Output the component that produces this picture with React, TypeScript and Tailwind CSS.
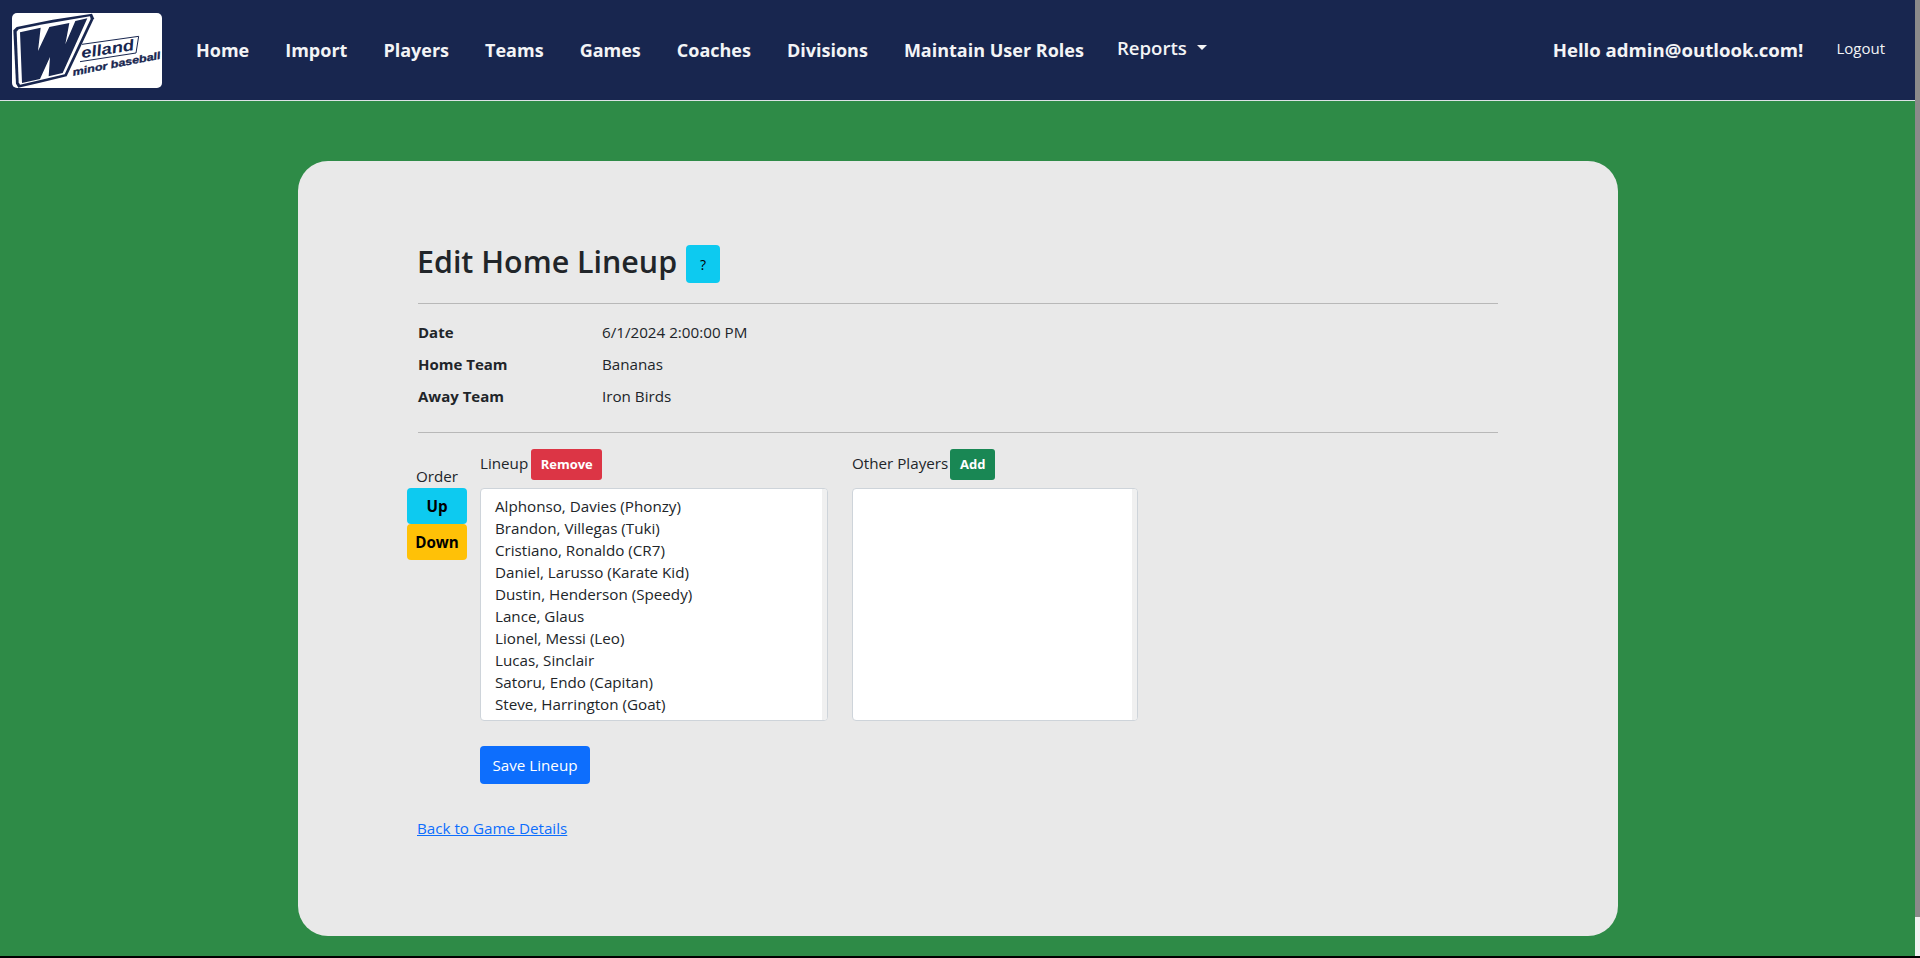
import React from "react";

const NAV_LINKS = ["Home", "Import", "Players", "Teams", "Games", "Coaches", "Divisions", "Maintain User Roles"];

const LINEUP = [
  "Alphonso, Davies (Phonzy)",
  "Brandon, Villegas (Tuki)",
  "Cristiano, Ronaldo (CR7)",
  "Daniel, Larusso (Karate Kid)",
  "Dustin, Henderson (Speedy)",
  "Lance, Glaus",
  "Lionel, Messi (Leo)",
  "Lucas, Sinclair",
  "Satoru, Endo (Capitan)",
  "Steve, Harrington (Goat)",
];

const GAME_INFO = [
  { label: "Date", value: "6/1/2024 2:00:00 PM" },
  { label: "Home Team", value: "Bananas" },
  { label: "Away Team", value: "Iron Birds" },
];

// logo is drawn, coordinates are 3x the page pixels
const Logo = () => (
  <svg viewBox="36 36 450 225" className="w-[150px] h-[75px] bg-white rounded-[5px] shrink-0">
    {/* big W: navy outline, white gap, navy fill */}
    <path d="M40 88 L50 78 L128 62 L158 56 L276 38 L282 52 L200 226 L120 245 L55 260 L48 248 Z" fill="#18264f" />
    <path d="M50 92 L56 85 L130 70 L270 46 L272 54 L194 220 L118 238 L60 251 L56 244 Z" fill="#fff" />
    <path d="M60 94 L122 80 L114 150 L148 78 L208 66 L196 130 L226 60 L262 52 L188 216 L146 226 L150 168 L120 234 L66 246 Z" fill="#18264f" />
    {/* outline round the rest of the name */}
    <path d="M246 130 L416 106 L408 156 L240 182" fill="none" stroke="#18264f" strokeWidth="3" />
    <text
      x="246"
      y="172"
      transform="rotate(-9 246 172)"
      fontFamily="'Liberation Sans', sans-serif"
      fontWeight="700"
      fontStyle="italic"
      fontSize="46"
      textLength="160"
      lengthAdjust="spacingAndGlyphs"
      fill="#18264f"
    >
      elland
    </text>
    <text
      x="220"
      y="224"
      transform="rotate(-11 220 224)"
      fontFamily="'Liberation Sans', sans-serif"
      fontWeight="700"
      fontStyle="italic"
      fontSize="30"
      textLength="268"
      lengthAdjust="spacingAndGlyphs"
      stroke="#18264f"
      strokeWidth="1"
      fill="#18264f"
    >
      minor baseball
    </text>
  </svg>
);

const Navbar = () => (
  <nav className="h-[101px] shrink-0 bg-[#18264f] border-b border-[#dee2e6] flex items-center pl-3 pr-[30px] text-[#f3f4f6]">
    <Logo />
    <div className="flex items-center gap-[36px] ml-[34px] text-[18px] font-bold">
      {NAV_LINKS.map((link) => (
        <a key={link} href="#">{link}</a>
      ))}
      <a href="#" className="flex items-center -mt-[5px] -ml-[3px] font-semibold text-[18.6px]">
        Reports
        <span className="ml-[10px] border-t-[5px] border-x-[5px] border-x-transparent border-t-[#f3f4f6]" />
      </a>
    </div>
    <div className="ml-auto flex items-center gap-[33px]">
      <span className="text-[18.6px] font-bold">Hello admin@outlook.com!</span>
      <a href="#" className="text-[15px] -mt-[3px]">Logout</a>
    </div>
  </nav>
);

const ListBox = ({ width, items }: { width: string; items: string[] }) => (
  <div className={`${width} h-[233px] bg-white border border-[#ced4da] rounded-[4px] flex overflow-hidden`}>
    <ul className="flex-1 pt-[6px] pl-[14px] text-[15.2px] leading-[22px]">
      {items.map((item) => (
        <li key={item}>{item}</li>
      ))}
    </ul>
    <div className="w-[5px] bg-[#f0f0f0]" />
  </div>
);

export default function App() {
  return (
    <div className="h-[958px] overflow-hidden flex flex-col bg-black font-['Open_Sans',sans-serif] text-[15.2px] text-[#212529]">
      <div className="flex h-[956px]">
        <div className="flex-1 flex flex-col bg-[#2e8b47]">
          <Navbar />
          <main className="pt-[60px] pl-[298px]">
            <section className="w-[1320px] h-[775px] bg-[#e9e9e9] rounded-[30px] px-[120px] pt-[84px]">
              <div className="flex items-start gap-[9px] h-[38px]">
                <h2 className="text-[30.4px] leading-[38px] font-semibold -mt-[2px] -ml-[1px]">Edit Home Lineup</h2>
                <button className="w-[34px] h-[38px] bg-[#0dcaf0] rounded-[4px] text-black text-[14px]">?</button>
              </div>
              <hr className="mt-[20px] border-[#b8b8b8]" />
              <dl className="mt-[12px]">
                {GAME_INFO.map((row) => (
                  <div key={row.label} className="flex h-[32px] items-center">
                    <dt className="w-[184px] font-bold text-[15px]">{row.label}</dt>
                    <dd>{row.value}</dd>
                  </div>
                ))}
              </dl>
              <hr className="mt-[20px] border-[#b8b8b8]" />

              <div className="flex mt-[16px] -ml-[11px]">
                <div className="w-[60px] mr-[13px] flex flex-col items-center pt-[19px]">
                  <span className="h-[17px] leading-[17px]">Order</span>
                  <button className="mt-[3px] w-[60px] h-[36px] bg-[#0dcaf0] rounded-[4px] text-black font-bold">Up</button>
                  <button className="w-[60px] h-[36px] bg-[#ffc107] rounded-[4px] text-black font-bold">Down</button>
                </div>
                <div className="mr-[24px]">
                  <div className="flex items-center gap-[3px] h-[31px] mb-[8px]">
                    <span className="-mt-[2px]">Lineup</span>
                    <button className="w-[71px] h-[31px] bg-[#dc3545] rounded-[3px] text-white text-[13px] font-bold">Remove</button>
                  </div>
                  <ListBox width="w-[348px]" items={LINEUP} />
                  <button className="mt-[25px] w-[110px] h-[38px] bg-[#0d6efd] rounded-[4px] text-white">Save Lineup</button>
                </div>
                <div>
                  <div className="flex items-center gap-[2px] h-[31px] mb-[8px]">
                    <span className="-mt-[2px]">Other Players</span>
                    <button className="w-[45px] h-[31px] bg-[#198754] rounded-[3px] text-white text-[13px] font-bold">Add</button>
                  </div>
                  <ListBox width="w-[286px]" items={[]} />
                </div>
              </div>

              <a href="#" className="block mt-[33px] -ml-px text-[#0d6efd] underline">Back to Game Details</a>
            </section>
          </main>
        </div>
        <div className="w-[5px] flex flex-col bg-[#f1f1f1]">
          <div className="h-[917px] bg-[#8a8a8a]" />
        </div>
      </div>
    </div>
  );
}
